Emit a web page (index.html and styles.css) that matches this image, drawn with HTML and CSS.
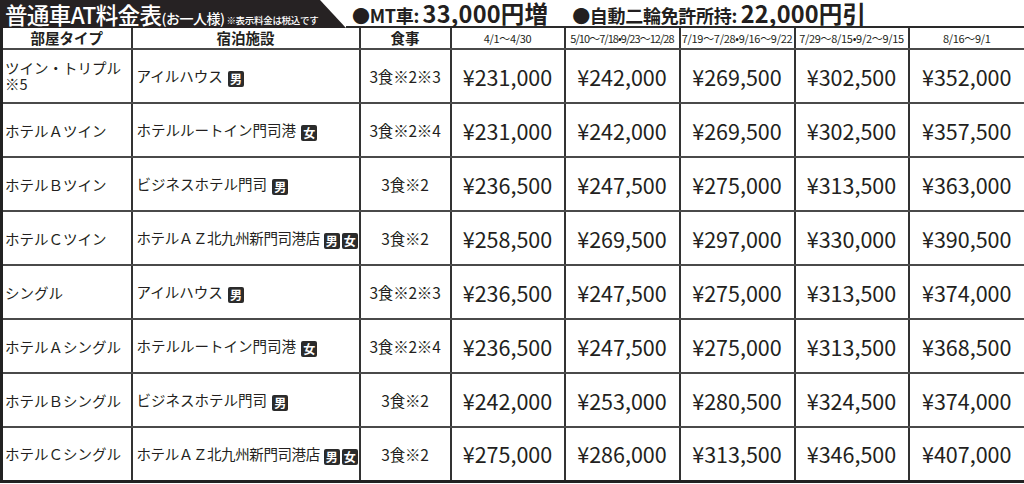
FILE: index.html
```html
<!DOCTYPE html>
<html lang="ja">
<head>
<meta charset="utf-8">
<link rel="stylesheet" href="styles.css">
</head>
<body>
<div class="page">
  <div class="top">
    <div class="banner">
      <span class="title">普通車AT料金表</span><span class="sub">(お一人様)</span><span class="note">※表示料金は税込です</span>
    </div>
    <div class="extra">
      <span class="item"><span class="lab">●MT車:</span> <span class="num">33,000円増</span></span>
      <span class="item"><span class="lab">●自動二輪免許所持:</span> <span class="num">22,000円引</span></span>
    </div>
  </div>
  <table class="price">
    <colgroup>
      <col class="c1"><col class="c2"><col class="c3"><col class="c4"><col class="c5"><col class="c6"><col class="c7"><col class="c8">
    </colgroup>
    <thead>
      <tr>
        <th class="hb">部屋タイプ</th>
        <th class="hb">宿泊施設</th>
        <th class="hb">食事</th>
        <th class="hd">4/1〜4/30</th>
        <th class="hd narrow">5/10〜7/18•9/23〜12/28</th>
        <th class="hd">7/19〜7/28•9/16〜9/22</th>
        <th class="hd">7/29〜8/15•9/2〜9/15</th>
        <th class="hd">8/16〜9/1</th>
      </tr>
    </thead>
    <tbody>
      <tr>
        <td class="room"><span class="ln">ツイン・トリプル</span><span class="ln">※5</span></td>
        <td class="hotel">アイルハウス <span class="badge">男</span></td>
        <td class="meal">3食※2※3</td>
        <td class="yen">¥231,000</td><td class="yen">¥242,000</td><td class="yen">¥269,500</td><td class="yen">¥302,500</td><td class="yen">¥352,000</td>
      </tr>
      <tr>
        <td class="room">ホテルＡツイン</td>
        <td class="hotel">ホテルルートイン門司港 <span class="badge">女</span></td>
        <td class="meal">3食※2※4</td>
        <td class="yen">¥231,000</td><td class="yen">¥242,000</td><td class="yen">¥269,500</td><td class="yen">¥302,500</td><td class="yen">¥357,500</td>
      </tr>
      <tr>
        <td class="room">ホテルＢツイン</td>
        <td class="hotel">ビジネスホテル門司 <span class="badge">男</span></td>
        <td class="meal">3食※2</td>
        <td class="yen">¥236,500</td><td class="yen">¥247,500</td><td class="yen">¥275,000</td><td class="yen">¥313,500</td><td class="yen">¥363,000</td>
      </tr>
      <tr>
        <td class="room">ホテルＣツイン</td>
        <td class="hotel tight">ホテルＡＺ北九州新門司港店<span class="badge first">男</span><span class="badge">女</span></td>
        <td class="meal">3食※2</td>
        <td class="yen">¥258,500</td><td class="yen">¥269,500</td><td class="yen">¥297,000</td><td class="yen">¥330,000</td><td class="yen">¥390,500</td>
      </tr>
      <tr>
        <td class="room">シングル</td>
        <td class="hotel">アイルハウス <span class="badge">男</span></td>
        <td class="meal">3食※2※3</td>
        <td class="yen">¥236,500</td><td class="yen">¥247,500</td><td class="yen">¥275,000</td><td class="yen">¥313,500</td><td class="yen">¥374,000</td>
      </tr>
      <tr>
        <td class="room">ホテルＡシングル</td>
        <td class="hotel">ホテルルートイン門司港 <span class="badge">女</span></td>
        <td class="meal">3食※2※4</td>
        <td class="yen">¥236,500</td><td class="yen">¥247,500</td><td class="yen">¥275,000</td><td class="yen">¥313,500</td><td class="yen">¥368,500</td>
      </tr>
      <tr>
        <td class="room">ホテルＢシングル</td>
        <td class="hotel">ビジネスホテル門司 <span class="badge">男</span></td>
        <td class="meal">3食※2</td>
        <td class="yen">¥242,000</td><td class="yen">¥253,000</td><td class="yen">¥280,500</td><td class="yen">¥324,500</td><td class="yen">¥374,000</td>
      </tr>
      <tr>
        <td class="room">ホテルＣシングル</td>
        <td class="hotel tight">ホテルＡＺ北九州新門司港店<span class="badge first">男</span><span class="badge">女</span></td>
        <td class="meal">3食※2</td>
        <td class="yen">¥275,000</td><td class="yen">¥286,000</td><td class="yen">¥313,500</td><td class="yen">¥346,500</td><td class="yen">¥407,000</td>
      </tr>
    </tbody>
  </table>
</div>
</body>
</html>
```
FILE: styles.css
```css
* { box-sizing: border-box; }
html, body { margin: 0; padding: 0; background: #fff; }
body {
  font-family: "Noto Sans CJK JP", "Noto Sans", sans-serif;
  color: #231f20;
  width: 1024px;
  height: 484px;
  overflow: hidden;
}
.page { width: 1024px; }
.top {
  display: flex;
  align-items: stretch;
  height: 28px;
}
.banner {
  width: 346px;
  flex: none;
  background: #262223;
  color: #fff;
  clip-path: polygon(0 0, 320px 0, 346px 28px, 0 28px);
  display: flex;
  align-items: baseline;
  padding: 3px 0 0 5px;
  white-space: nowrap;
  line-height: 1;
}
.title { font-size: 22.5px; font-weight: 500; letter-spacing: -0.6px; }
.sub { font-size: 14px; font-weight: 500; letter-spacing: -0.5px; }
.note { font-size: 9.5px; font-weight: 500; margin-left: 2px; letter-spacing: -0.3px; }
.extra {
  flex: 1;
  display: flex;
  gap: 24px;
  padding: 2px 0 0 6px;
  align-items: baseline;
  white-space: nowrap;
  line-height: 1;
  height: 28px;
  border-bottom: 2px solid #2a2a2a;
}
.item { font-weight: 700; }
.lab { font-size: 18px; letter-spacing: -0.3px; }
.num { font-size: 23.5px; letter-spacing: 0.2px; }

.price {
  width: 1024px;
  table-layout: fixed;
  border-collapse: collapse;
  border-left: 3px solid #222;
  border-right: 3px solid #222;
  border-bottom: 3px solid #222;
}
.c1 { width: 130px; }
.c2 { width: 228px; }
.c3 { width: 91px; }
.c4 { width: 114px; }
.c5 { width: 115px; }
.c6 { width: 115px; }
.c7 { width: 114px; }
.c8 { width: 117px; }
.price th, .price td {
  border-left: 2px solid #333;
  border-right: 2px solid #333;
  border-bottom: 2px solid #4a4a4a;
  padding: 0;
  white-space: nowrap;
}
.price thead tr { height: 21px; }
.price tbody tr { height: 54px; }
.price th { text-align: center; line-height: 18px; }
.hb { font-size: 14.5px; font-weight: 700; }
.hd { font-size: 11px; font-weight: 400; letter-spacing: -0.3px; }
.hd.narrow { letter-spacing: -0.95px; }
.room {
  font-size: 14.5px;
  padding-left: 2px !important;
}
.ln { display: block; line-height: 16px; }
.hotel {
  font-size: 14.5px;
  padding-left: 4px !important;
}
.hotel.tight { letter-spacing: -0.4px; }
.meal { font-size: 15.5px; text-align: center; letter-spacing: -0.2px; }
.yen { font-size: 21.5px; text-align: center; }
.badge {
  display: inline-block;
  width: 16px;
  height: 16px;
  line-height: 16px;
  background: #2b2b2b;
  color: #fff;
  font-size: 12px;
  font-weight: 700;
  text-align: center;
  border-radius: 2px;
  vertical-align: -2px;
  margin-left: 2px;
  letter-spacing: 0;
}
.badge.first { margin-left: 4px; }
```
